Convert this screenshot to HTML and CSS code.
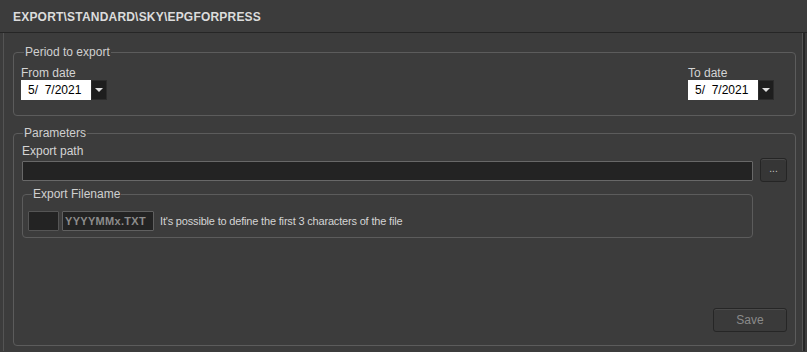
FILE: index.html
```html
<!DOCTYPE html>
<html lang="en">
<head>
    <meta charset="UTF-8">
    <title>Export - EPGFORPRESS</title>
    <link rel="stylesheet" href="styles.css">
</head>
<body>
    <div class="title-bar">EXPORT\STANDARD\SKY\EPGFORPRESS</div>
    <div class="panel">
        <fieldset class="group period">
            <legend>Period to export</legend>
            <div class="dates">
                <div class="date-field">
                    <label>From date</label>
                    <div class="date-picker">
                        <span class="date-value">5/&nbsp; 7/2021</span>
                        <span class="drop-button"><span class="arrow"></span></span>
                    </div>
                </div>
                <div class="date-field">
                    <label>To date</label>
                    <div class="date-picker">
                        <span class="date-value">5/&nbsp; 7/2021</span>
                        <span class="drop-button"><span class="arrow"></span></span>
                    </div>
                </div>
            </div>
        </fieldset>

        <fieldset class="group params">
            <legend>Parameters</legend>
            <label class="field-label">Export path</label>
            <div class="path-row">
                <div class="text-input path-input"></div>
                <button class="browse-button">...</button>
            </div>

            <fieldset class="group filename">
                <legend>Export Filename</legend>
                <div class="filename-row">
                    <div class="text-input prefix-input"></div>
                    <div class="text-input pattern-input">YYYYMMx.TXT</div>
                    <span class="hint">It's possible to define the first 3 characters of the file</span>
                </div>
            </fieldset>

            <div class="actions">
                <button class="save-button" disabled>Save</button>
            </div>
        </fieldset>
    </div>
</body>
</html>
```

FILE: styles.css
```css
body {
    margin: 0;
    width: 807px;
    height: 352px;
    overflow: hidden;
    background-color: #3c3c3c;
    font-family: "Liberation Sans", Arial, sans-serif;
    font-size: 12px;
    color: #d4d4d4;
}
.title-bar {
    height: 33px;
    box-sizing: border-box;
    padding: 10px 0 0 13px;
    border-bottom: 1px solid #262626;
    font-weight: bold;
    font-size: 12px;
    letter-spacing: 0.2px;
    color: #dcdcdc;
}
.panel {
    margin-left: 3px;
    width: 800px;
    height: 318px;
    box-sizing: border-box;
    border-left: 1px solid #545454;
    border-right: 1px solid #555555;
    box-shadow: 2px 0 0 #262626;
    padding: 12px 0 0 9px;
}
.group {
    margin: 0;
    border: 1px solid #5c5c5c;
    border-radius: 4px;
    box-sizing: border-box;
}
.group legend {
    padding: 0 1px;
    color: #d0d0d0;
    line-height: 14px;
}
.period {
    width: 783px;
    height: 71px;
    padding: 7px 21px 0 7px;
}
.period legend {
    margin-left: 3px;
}
.dates {
    display: flex;
    justify-content: space-between;
}
.date-field label {
    display: block;
    line-height: 14px;
}
.date-picker {
    display: flex;
    height: 20px;
}
.date-value {
    width: 70px;
    box-sizing: border-box;
    background-color: #ffffff;
    color: #000000;
    padding: 3px 0 0 7px;
    line-height: 15px;
    font-size: 12px;
}
.drop-button {
    width: 16px;
    background-color: #1e1e1e;
    border: 1px solid #2c2c2c;
    box-sizing: border-box;
    display: flex;
    align-items: center;
    justify-content: center;
}
.arrow {
    width: 0;
    height: 0;
    border-left: 4px solid transparent;
    border-right: 4px solid transparent;
    border-top: 4px solid #e0e0e0;
}
.params {
    width: 783px;
    height: 220px;
    margin-top: 10px;
    padding: 4px 8px 0 8px;
}
.params legend {
    margin-left: 1px;
}
.field-label {
    display: block;
    line-height: 14px;
    margin-bottom: 1px;
}
.path-row {
    display: flex;
    align-items: center;
}
.text-input {
    box-sizing: border-box;
    height: 20px;
    background-color: #232323;
    border: 1px solid #686868;
    border-radius: 1px;
}
.path-input {
    width: 731px;
}
.browse-button {
    width: 27px;
    height: 24px;
    margin-left: 7px;
    margin-top: -1px;
    background-color: #363636;
    border: 1px solid #252525;
    border-radius: 3px;
    box-shadow: inset 0 1px 0 #4a4a4a;
    color: #c8c8c8;
    font-family: "Liberation Sans", Arial, sans-serif;
    font-size: 10px;
    padding: 0 0 4px;
}
.filename {
    width: 731px;
    height: 51px;
    margin-top: 5px;
    padding: 10px 7px 0 5px;
}
.filename legend {
    margin-left: 4px;
}
.filename-row {
    display: flex;
    align-items: center;
    gap: 3px;
}
.prefix-input {
    width: 31px;
    border-color: #555555;
}
.pattern-input {
    width: 92px;
    border-color: #606060;
    color: #8c8c8c;
    font-weight: bold;
    font-size: 11px;
    line-height: 18px;
    padding-left: 2px;
    letter-spacing: 0.3px;
}
.hint {
    margin-left: 3px;
    font-size: 11px;
    letter-spacing: -0.18px;
}
.actions {
    display: flex;
    justify-content: flex-end;
    margin-top: 70px;
}
.save-button {
    width: 74px;
    height: 24px;
    background-color: #3a3a3a;
    border: 1px solid #262626;
    border-radius: 3px;
    box-shadow: inset 0 1px 0 #4a4a4a;
    color: #8a8a8a;
    font-family: "Liberation Sans", Arial, sans-serif;
    font-size: 12px;
}
```
